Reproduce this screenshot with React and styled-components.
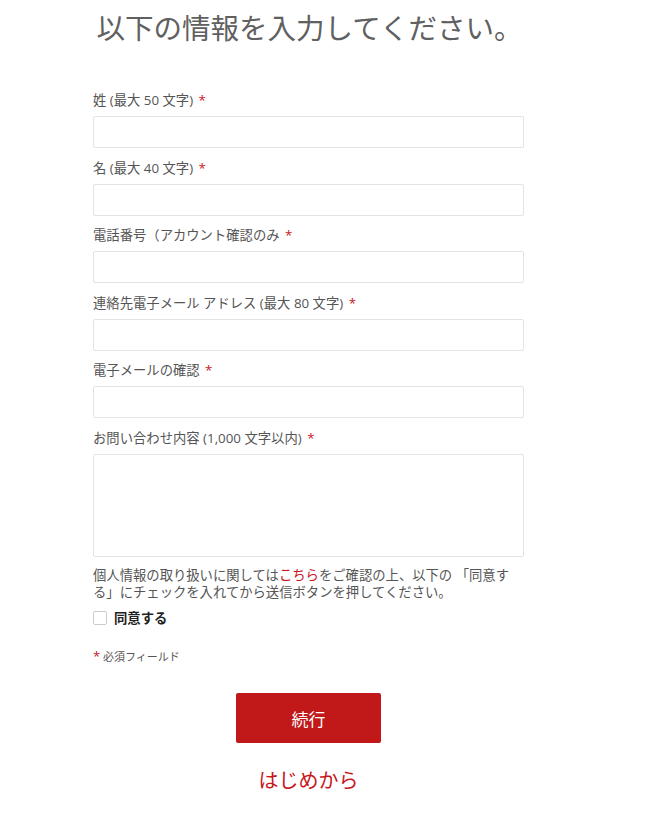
import React from 'react';
import styled, { createGlobalStyle } from 'styled-components';

const GlobalStyle = createGlobalStyle`
    body {
        margin: 0;
        background: #FFFFFF;
        font-family: "Open Sans", "Noto Sans CJK JP", sans-serif;
    }
`

const fields = [
    { label: '姓 (最大 50 文字)' },
    { label: '名 (最大 40 文字)' },
    { label: '電話番号（アカウント確認のみ' },
    { label: '連絡先電子メール アドレス (最大 80 文字)' },
    { label: '電子メールの確認' },
];

const App = () => {
    return (
        <>
            <GlobalStyle />
            <Page>
                <Title>以下の情報を入力してください。</Title>
                <Form>
                    {fields.map((f) => (
                        <Field key={f.label}>
                            <Label>
                                {f.label} <Req>*</Req>
                            </Label>
                            <Input type="text" />
                        </Field>
                    ))}
                    <Field>
                        <Label>
                            お問い合わせ内容 (1,000 文字以内) <Req>*</Req>
                        </Label>
                        <TextArea />
                    </Field>
                    <Notice>
                        個人情報の取り扱いに関しては<NoticeLink href="#">こちら</NoticeLink>をご確認の上、以下の 「同意する」にチェックを入れてから送信ボタンを押してください。
                    </Notice>
                    <CheckRow>
                        <CheckBox type="checkbox" />
                        <CheckLabel>同意する</CheckLabel>
                    </CheckRow>
                    <RequiredNote>
                        <Req>*</Req> 必須フィールド
                    </RequiredNote>
                    <Actions>
                        <SubmitBtn type="button">続行</SubmitBtn>
                        <RestartLink href="#">はじめから</RestartLink>
                    </Actions>
                </Form>
            </Page>
        </>
    );
};

const Page = styled.div`
    width: 431px;
    margin-left: 93px;
    padding-top: 9px;
    padding-bottom: 20px;
`
const Title = styled.h1`
    margin: 0 0 0 2px;
    text-align: center;
    font-size: 28.5px;
    line-height: 36px;
    font-weight: 400;
    color: #606060;
    font-family: "Noto Sans CJK JP", sans-serif;
`
const Form = styled.form`
    display: flex;
    flex-direction: column;
    margin-top: 46px;
`
const Field = styled.div`
    display: flex;
    flex-direction: column;
    gap: 7px;
    margin-bottom: 10.5px;
`
const Label = styled.label`
    font-size: 13.33px;
    line-height: 18px;
    color: #555555;
`
const Req = styled.span`
    color: #c8161d;
    margin-left: 2px;
`
const Input = styled.input`
    box-sizing: border-box;
    width: 100%;
    height: 32px;
    margin: 0;
    border: 1px solid #e3e3e3;
    border-radius: 2px;
    background: #FFFFFF;
    outline: none;
`
const TextArea = styled.textarea`
    box-sizing: border-box;
    width: 100%;
    height: 103px;
    margin: 0;
    border: 1px solid #e3e3e3;
    border-radius: 2px;
    resize: none;
    outline: none;
`
const Notice = styled.p`
    margin: 0;
    font-size: 13.33px;
    line-height: 16.5px;
    color: #555555;
`
const NoticeLink = styled.a`
    color: #c8161d;
    text-decoration: none;
`
const CheckRow = styled.div`
    display: flex;
    align-items: center;
    gap: 7px;
    margin-top: 8px;
`
const CheckBox = styled.input`
    appearance: none;
    width: 14px;
    height: 14px;
    margin: 0;
    border: 1px solid #cccccc;
    border-radius: 2px;
    background: #FFFFFF;
`
const CheckLabel = styled.span`
    font-size: 13.33px;
    font-weight: 700;
    color: #222222;
`
const RequiredNote = styled.div`
    margin-top: 21px;
    font-size: 11px;
    line-height: 16px;
    color: #555555;
    ${Req} {
        font-size: 13px;
        margin-left: 0;
    }
`
const Actions = styled.div`
    display: flex;
    flex-direction: column;
    align-items: center;
    margin-top: 28px;
`
const SubmitBtn = styled.button`
    width: 145px;
    height: 50px;
    border: none;
    border-radius: 2px;
    background: #c1181a;
    color: #FFFFFF;
    font-size: 17px;
    font-family: "Noto Sans CJK JP", sans-serif;
    cursor: pointer;
    &:hover {
        background: #a81416;
    }
`
const RestartLink = styled.a`
    margin-top: 23px;
    font-size: 20px;
    line-height: 28px;
    color: #c8161d;
    text-decoration: none;
    font-family: "Noto Sans CJK JP", sans-serif;
`

export default App;
